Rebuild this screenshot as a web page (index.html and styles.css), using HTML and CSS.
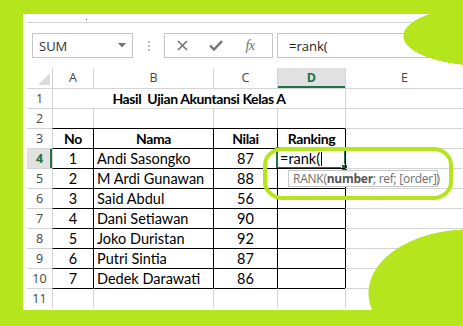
FILE: index.html
```html
<!DOCTYPE html>
<html>
<head>
<meta charset="utf-8">
<link rel="stylesheet" href="styles.css">
</head>
<body>
<div class="panel">
  <div class="topline"><span class="dot"></span></div>
  <div class="fbar">
    <div class="namebox"><span>SUM</span><svg width="8" height="5" viewBox="0 0 8 5"><path d="M0 0H8L4 4.5Z" fill="#737373"/></svg></div>
    <div class="grip"><i></i><i></i><i></i></div>
    <div class="icons">
      <span class="slot"><svg width="11" height="11" viewBox="0 0 11 11"><path d="M1 1L10 10M10 1L1 10" stroke="#737373" stroke-width="1.6" fill="none"/></svg></span>
      <span class="slot"><svg width="14" height="11" viewBox="0 0 14 11"><path d="M1 5.5L5 9.5L13 1.2" stroke="#737373" stroke-width="2.4" fill="none"/></svg></span>
      <span class="slot fx">fx</span>
    </div>
    <div class="formula">=rank(</div>
  </div>
  <div class="sheet">
    <div class="h corner"><svg width="25" height="20" viewBox="0 0 25 20"><path d="M11 17H23V5Z" fill="#dcdcdc"/></svg></div>
    <div class="h">A</div><div class="h">B</div><div class="h">C</div><div class="h selc">D</div><div class="h">E</div>

    <div class="c r">1</div><div class="c title">Hasil  Ujian Akuntansi Kelas A</div><div class="c"></div>
    <div class="c r">2</div><div class="c"></div><div class="c"></div><div class="c"></div><div class="c"></div><div class="c"></div>

    <div class="c r">3</div><div class="c bt ctr b">No</div><div class="c bt bl ctr b">Nama</div><div class="c bt bl ctr b">Nilai</div><div class="c bt bl ctr b">Ranking</div><div class="c bl"></div>

    <div class="c r selr">4</div><div class="c bt ctr">1</div><div class="c bt bl l">Andi Sasongko</div><div class="c bt bl ctr">87</div><div class="c bt bl edit"><span class="etext">=rank(</span><span class="caret"></span><span class="selbox"><span class="handle"></span></span></div><div class="c bl"></div>

    <div class="c r">5</div><div class="c bt ctr">2</div><div class="c bt bl l">M Ardi Gunawan</div><div class="c bt bl ctr">88</div><div class="c bt bl"></div><div class="c bl"></div>

    <div class="c r">6</div><div class="c bt ctr">3</div><div class="c bt bl l">Said Abdul</div><div class="c bt bl ctr">56</div><div class="c bt bl"></div><div class="c bl"></div>

    <div class="c r">7</div><div class="c bt ctr">4</div><div class="c bt bl l">Dani Setiawan</div><div class="c bt bl ctr">90</div><div class="c bt bl"></div><div class="c bl"></div>

    <div class="c r">8</div><div class="c bt ctr">5</div><div class="c bt bl l">Joko Duristan</div><div class="c bt bl ctr">92</div><div class="c bt bl"></div><div class="c bl"></div>

    <div class="c r">9</div><div class="c bt ctr">6</div><div class="c bt bl l">Putri Sintia</div><div class="c bt bl ctr">87</div><div class="c bt bl"></div><div class="c bl"></div>

    <div class="c r">10</div><div class="c bt ctr">7</div><div class="c bt bl l">Dedek Darawati</div><div class="c bt bl ctr">86</div><div class="c bt bl"></div><div class="c bl"></div>

    <div class="c r">11</div><div class="c bt"></div><div class="c bt"></div><div class="c bt"></div><div class="c bt"></div><div class="c"></div>
  </div>
  <div class="tooltip">RANK(<b>number</b>; ref; [order])</div>
</div>
<div class="ring"></div>
<div class="blobs"></div>
</body>
</html>
```
FILE: styles.css
```css
html, body {
  margin: 0;
  padding: 0;
  overflow: hidden;
}
body {
  position: relative;
  width: 463px;
  height: 326px;
  background: #b5e61d;
}
.panel {
  position: relative;
  margin: 14px 0 0 23px;
  width: 440px;
  height: 296px;
  padding: 8px 0 0 4px;
  box-sizing: border-box;
  background: #fff;
  overflow: hidden;
}
.topline {
  position: relative;
  height: 1px;
  background: #d6d6d6;
}
.dot {
  position: absolute;
  left: 59px;
  top: -3px;
  width: 1px;
  height: 1px;
  background: #444;
}
.fbar {
  display: flex;
  height: 25px;
  margin-top: 10px;
  font-family: "Open Sans", sans-serif;
  font-size: 13px;
}
.namebox {
  margin-left: 5px;
  width: 101px;
  box-sizing: border-box;
  border: 1px solid #c6c6c6;
  display: flex;
  align-items: center;
  justify-content: space-between;
  padding: 0 6px 0 6px;
  color: #333;
}
.grip {
  width: 31px;
  display: flex;
  flex-direction: column;
  align-items: center;
  justify-content: center;
  gap: 2px;
}
.grip i {
  display: block;
  width: 2px;
  height: 2px;
  background: #bdbdbd;
}
.icons {
  width: 109px;
  box-sizing: border-box;
  border: 1px solid #c6c6c6;
  display: flex;
  align-items: center;
}
.slot {
  width: 34px;
  display: flex;
  justify-content: center;
  align-items: center;
}
.fx {
  font-family: "Liberation Serif", serif;
  font-style: italic;
  font-size: 14px;
  color: #707070;
  letter-spacing: -0.5px;
}
.formula {
  flex: 1;
  margin-left: 4px;
  box-sizing: border-box;
  border: 1px solid #c6c6c6;
  border-right: none;
  padding-left: 11px;
  display: flex;
  align-items: center;
  color: #222;
}
.sheet {
  margin-top: 10px;
  display: grid;
  grid-template-columns: 25px 41px 120px 64px 68px 118px;
  grid-auto-rows: 20px;
}
.h {
  box-sizing: border-box;
  border-left: 1px solid #d4d4d4;
  font-family: "Open Sans", sans-serif;
  font-size: 12.5px;
  line-height: 20px;
  color: #444;
  text-align: center;
}
.corner {
  border-left: none;
}
.corner svg {
  display: block;
}
.selc {
  background: #e1e1e1;
  color: #217346;
  font-weight: bold;
  box-shadow: inset 0 -2px 0 #217346;
}
.c {
  position: relative;
  box-sizing: border-box;
  border-left: 1px solid #d4d4d4;
  border-top: 1px solid #d4d4d4;
  font-family: Lato, sans-serif;
  font-size: 14.5px;
  line-height: 20px;
  color: #000;
  white-space: pre;
}
.r {
  border-left: none;
  font-family: "Open Sans", sans-serif;
  font-size: 12.5px;
  color: #444;
  text-align: center;
}
.selr {
  background: #e1e1e1;
  color: #217346;
  font-weight: bold;
  box-shadow: inset -2px 0 0 #217346;
}
.title {
  grid-column: span 4;
  text-align: center;
  font-weight: bold;
  font-size: 14px;
  letter-spacing: -0.4px;
}
.bt { border-top-color: #000; }
.bl { border-left-color: #000; }
.ctr { text-align: center; }
.b {
  font-weight: bold;
  font-size: 14px;
  letter-spacing: -0.4px;
}
.l { padding-left: 3px; }
.edit {
  padding-left: 2px;
  display: flex;
  align-items: center;
}
.caret {
  display: inline-block;
  width: 1px;
  height: 14px;
  margin-left: 1px;
  background: #000;
}
.selbox {
  position: absolute;
  left: -2px;
  top: -2px;
  width: 70px;
  height: 22px;
  box-sizing: border-box;
  border: 2px solid #217346;
}
.handle {
  position: absolute;
  right: -4px;
  bottom: -4px;
  width: 5px;
  height: 5px;
  background: #217346;
  border: 1px solid #fff;
}
.tooltip {
  position: absolute;
  left: 265px;
  top: 156px;
  width: 150px;
  height: 17px;
  box-sizing: border-box;
  border: 1px solid #c6c6c6;
  background: #fff;
  padding-left: 4px;
  font-family: "Open Sans", sans-serif;
  font-size: 12px;
  letter-spacing: -0.25px;
  line-height: 15px;
  color: #6e6e6e;
  white-space: nowrap;
}
.tooltip b {
  color: #555;
}
.ring {
  position: absolute;
  left: 263px;
  top: 147px;
  width: 190px;
  height: 53px;
  box-sizing: border-box;
  border: 4.5px solid #b5e61d;
  border-radius: 20px / 18px;
}
.blobs {
  position: absolute;
  left: 0;
  top: 0;
  width: 463px;
  height: 326px;
  pointer-events: none;
  background:
    radial-gradient(82px 30px at 485px 36px, #b5e61d 99%, transparent 100%),
    radial-gradient(102px 64px at 470px 293px, #b5e61d 99%, transparent 100%);
}
```
